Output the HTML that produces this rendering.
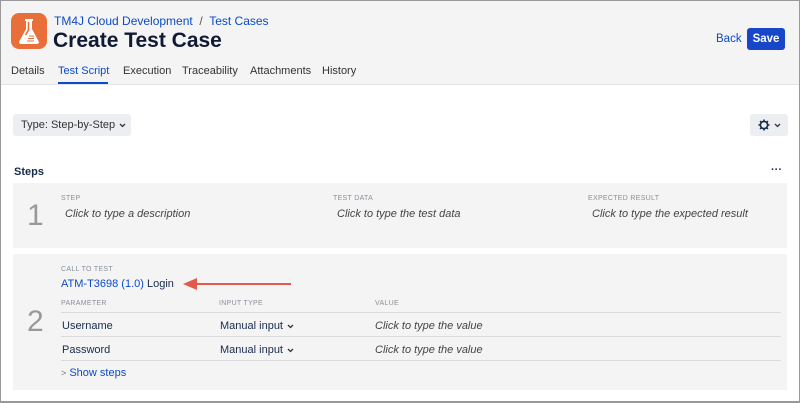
<!DOCTYPE html>
<html><head><meta charset="utf-8"><style>
*{box-sizing:border-box;margin:0;padding:0}
body{width:800px;height:403px;overflow:hidden;font-family:"Liberation Sans",sans-serif;background:#fff;position:relative;color:#172b4d}
.frame{position:absolute;inset:0;border:1px solid #999;border-bottom:2px solid #999;pointer-events:none}
.hdr{position:absolute;left:0;top:0;width:800px;height:85px;background:#f4f4f4;border-bottom:1px solid #e2e4e8}
.a{position:absolute;white-space:nowrap}
.blue{color:#0b4bc5}
.lbl{font-size:7px;color:#8a8f99;letter-spacing:.3px}
.it{font-style:italic;font-size:11px;color:#444}
.box{position:absolute;left:13px;width:774px;background:#f4f4f4}
.num{position:absolute;font-size:30px;color:#999;font-weight:300}
.line{position:absolute;height:1px;background:#dcdcdc}
.tab{position:absolute;top:65px;font-size:11px;color:#333;white-space:nowrap}
.chev{display:inline-block;vertical-align:middle;margin-left:4px}
</style></head><body>
<div class="hdr"></div>
<svg class="a" style="left:11px;top:13px" width="36" height="36" viewBox="0 0 36 36">
<rect x="0" y="0" width="36" height="36" rx="8" fill="#e96f3a"/>
<path d="M14 6h8v2h-1v8l7 13c0 1-1 2-2 2H10c-1 0-2-1-2-2l7-13V8h-1z" fill="#fff"/>
<path d="M17.5 9v8l-3 5" stroke="#e96f3a" stroke-width="1.6" fill="none"/>
<path d="M18 23h5M17 25.5h6M16 28h7" stroke="#e96f3a" stroke-width="1.1"/>
</svg>
<div class="a blue" style="left:54px;top:14px;font-size:12px">TM4J Cloud Development &nbsp;<span style="color:#555">/</span>&nbsp; Test Cases</div>
<div class="a" style="left:53px;top:29px;font-size:21px;font-weight:bold;color:#111a33">Create Test Case</div>
<div class="a blue" style="left:716px;top:33px;font-size:11.5px">Back</div>
<div class="a" style="left:747px;top:28px;width:38px;height:22px;background:#1747c8;border-radius:3px;color:#fff;font-weight:bold;font-size:11.5px;text-align:center;line-height:22px">Save</div>
<div class="tab" style="left:11px">Details</div>
<div class="tab blue" style="left:58px;color:#0b4bc5">Test Script</div>
<div class="a" style="left:58px;top:82px;width:50px;height:2px;background:#0b4bc5"></div>
<div class="tab" style="left:123px">Execution</div>
<div class="tab" style="left:182px">Traceability</div>
<div class="tab" style="left:250px">Attachments</div>
<div class="tab" style="left:322px">History</div>
<div class="a" style="left:13px;top:114px;width:118px;height:22px;background:#eceef1;border-radius:3px;font-size:11px;color:#333;line-height:22px;padding-left:8px">Type: Step-by-Step<svg class="chev" width="7" height="5"><path d="M1 1l2.5 2.5L6 1" stroke="#333" stroke-width="1.3" fill="none"/></svg></div>
<div class="a" style="left:750px;top:114px;width:38px;height:22px;background:#eceef1;border-radius:3px;">
<svg class="a" style="left:8px;top:5px" width="12" height="12" viewBox="0 0 12 12"><circle cx="6" cy="6" r="3.6" stroke="#172b4d" stroke-width="1.6" fill="none"/><path d="M6 0.5v2M6 9.5v2M0.5 6h2M9.5 6h2M2.1 2.1l1.4 1.4M8.5 8.5l1.4 1.4M2.1 9.9l1.4-1.4M8.5 3.5l1.4-1.4" stroke="#172b4d" stroke-width="1.6"/></svg>
<svg class="a" style="left:24px;top:9px" width="7" height="5"><path d="M1 1l2.5 2.5L6 1" stroke="#333" stroke-width="1.3" fill="none"/></svg>
</div>
<div class="a" style="left:14px;top:166px;font-size:11px;font-weight:bold">Steps</div>
<div class="a" style="left:771px;top:164px;font-size:11px;font-weight:bold">···</div>
<div class="box" style="top:183px;height:65px">
<div class="num" style="left:14px;top:16px">1</div>
<div class="a lbl" style="left:48px;top:12px">STEP</div>
<div class="a it" style="left:52px;top:25px">Click to type a description</div>
<div class="a lbl" style="left:320px;top:12px">TEST DATA</div>
<div class="a it" style="left:324px;top:25px">Click to type the test data</div>
<div class="a lbl" style="left:575px;top:12px">EXPECTED RESULT</div>
<div class="a it" style="left:579px;top:25px">Click to type the expected result</div>
</div>
<div class="box" style="top:254px;height:136px">
<div class="num" style="left:14px;top:51px">2</div>
<div class="a lbl" style="left:48px;top:12px">CALL TO TEST</div>
<div class="a" style="left:48px;top:24px;font-size:11px"><span class="blue">ATM-T3698 (1.0)</span> Login</div>
<svg class="a" style="left:168px;top:23px" width="112" height="14"><path d="M14 7H110" stroke="#e25a4c" stroke-width="2"/><path d="M2 7L16 1V13z" fill="#e25a4c"/></svg>
<div class="a lbl" style="left:48px;top:46px">PARAMETER</div>
<div class="a lbl" style="left:206px;top:46px">INPUT TYPE</div>
<div class="a lbl" style="left:362px;top:46px">VALUE</div>
<div class="line" style="left:48px;top:58px;width:720px"></div>
<div class="a" style="left:49px;top:66px;font-size:11px">Username</div>
<div class="a" style="left:207px;top:66px;font-size:11px">Manual input<svg class="chev" width="7" height="5"><path d="M1 1l2.5 2.5L6 1" stroke="#333" stroke-width="1.3" fill="none"/></svg></div>
<div class="a it" style="left:362px;top:66px">Click to type the value</div>
<div class="line" style="left:48px;top:82px;width:720px"></div>
<div class="a" style="left:49px;top:90px;font-size:11px">Password</div>
<div class="a" style="left:207px;top:90px;font-size:11px">Manual input<svg class="chev" width="7" height="5"><path d="M1 1l2.5 2.5L6 1" stroke="#333" stroke-width="1.3" fill="none"/></svg></div>
<div class="a it" style="left:362px;top:90px">Click to type the value</div>
<div class="line" style="left:48px;top:106px;width:720px"></div>
<div class="a" style="left:48px;top:113px;font-size:11px"><span style="color:#777;font-size:9px">&gt;</span> <span class="blue">Show steps</span></div>
</div>
<div class="frame"></div>
</body></html>
